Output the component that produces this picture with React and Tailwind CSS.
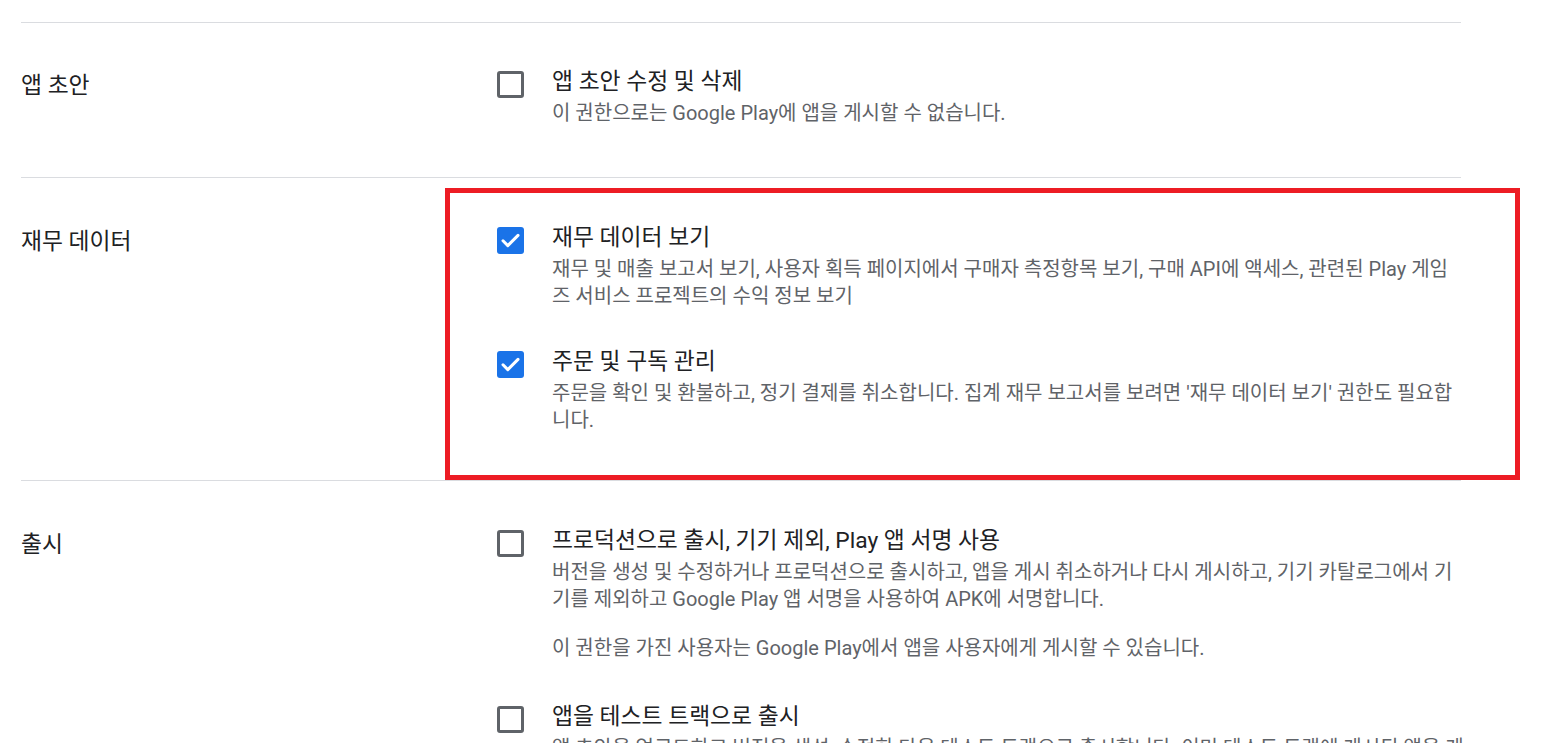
import React from 'react';

const font = { fontFamily: 'Roboto, "Noto Sans CJK KR", sans-serif' };

function Checkbox({ checked }) {
  if (checked) {
    return (
      <div className="mt-[4px] h-[27px] w-[27px] shrink-0 rounded-[3px] bg-[#1a73e8]">
        <svg width="27" height="27" viewBox="0 0 27 27" fill="none">
          <path d="M6 13.8l4.8 4.8L21 8.4" stroke="#fff" strokeWidth="3" strokeLinecap="round" strokeLinejoin="round" />
        </svg>
      </div>
    );
  }
  return <div className="mt-[4px] h-[27px] w-[27px] shrink-0 rounded-[3px] border-[3px] border-[#5f6368]" />;
}

function Item({ checked, title, lines, extra, className }) {
  return (
    <div className={'flex gap-[28px] ' + (className || '')}>
      <Checkbox checked={checked} />
      <div className="flex flex-col">
        <div className="text-[22.8px] leading-[30px] text-[#202124] whitespace-nowrap">{title}</div>
        <div className="mt-[3px] text-[20px] leading-[27px] text-[#5f6368]">
          {lines.map((l) => (
            <div key={l} className="whitespace-nowrap">{l}</div>
          ))}
        </div>
        {extra && (
          <div className="mt-[22px] text-[20px] leading-[27px] text-[#5f6368] whitespace-nowrap">{extra}</div>
        )}
      </div>
    </div>
  );
}

function Section({ label, children, className }) {
  return (
    <div className={'relative flex border-t border-[#dadce0] ' + (className || '')}>
      <div className="w-[476px] shrink-0 pt-[4px] text-[22.8px] leading-[30px] text-[#202124]">{label}</div>
      <div className="flex flex-col">{children}</div>
    </div>
  );
}

export default function App() {
  return (
    <div className="h-[743px] w-[1542px] overflow-hidden bg-white" style={font}>
      <div className="ml-[21px] w-[1440px] pt-[22px]">
        <Section label="앱 초안" className="pt-[44px] pb-[50px]">
          <Item
            title="앱 초안 수정 및 삭제"
            lines={['이 권한으로는 Google Play에 앱을 게시할 수 없습니다.']}
          />
        </Section>

        <Section label="재무 데이터" className="pt-[45px] pb-[46px]">
          <Item
            checked
            title="재무 데이터 보기"
            lines={[
              '재무 및 매출 보고서 보기, 사용자 획득 페이지에서 구매자 측정항목 보기, 구매 API에 액세스, 관련된 Play 게임',
              '즈 서비스 프로젝트의 수익 정보 보기',
            ]}
          />
          <Item
            checked
            className="mt-[37px]"
            title="주문 및 구독 관리"
            lines={[
              "주문을 확인 및 환불하고, 정기 결제를 취소합니다. 집계 재무 보고서를 보려면 '재무 데이터 보기' 권한도 필요합",
              '니다.',
            ]}
          />
          <div className="pointer-events-none absolute top-[10px] bottom-0 left-[424px] right-[-59px] border-[5px] border-[#ed1c24]" />
        </Section>

        <Section label="출시" className="pt-[45px]">
          <Item
            title="프로덕션으로 출시, 기기 제외, Play 앱 서명 사용"
            lines={[
              '버전을 생성 및 수정하거나 프로덕션으로 출시하고, 앱을 게시 취소하거나 다시 게시하고, 기기 카탈로그에서 기',
              '기를 제외하고 Google Play 앱 서명을 사용하여 APK에 서명합니다.',
            ]}
            extra="이 권한을 가진 사용자는 Google Play에서 앱을 사용자에게 게시할 수 있습니다."
          />
          <Item
            className="mt-[40px]"
            title="앱을 테스트 트랙으로 출시"
            lines={[
              '앱 초안을 업로드하고 버전을 생성, 수정한 다음 테스트 트랙으로 출시합니다. 이미 테스트 트랙에 게시된 앱을 게',
            ]}
          />
        </Section>
      </div>
    </div>
  );
}
